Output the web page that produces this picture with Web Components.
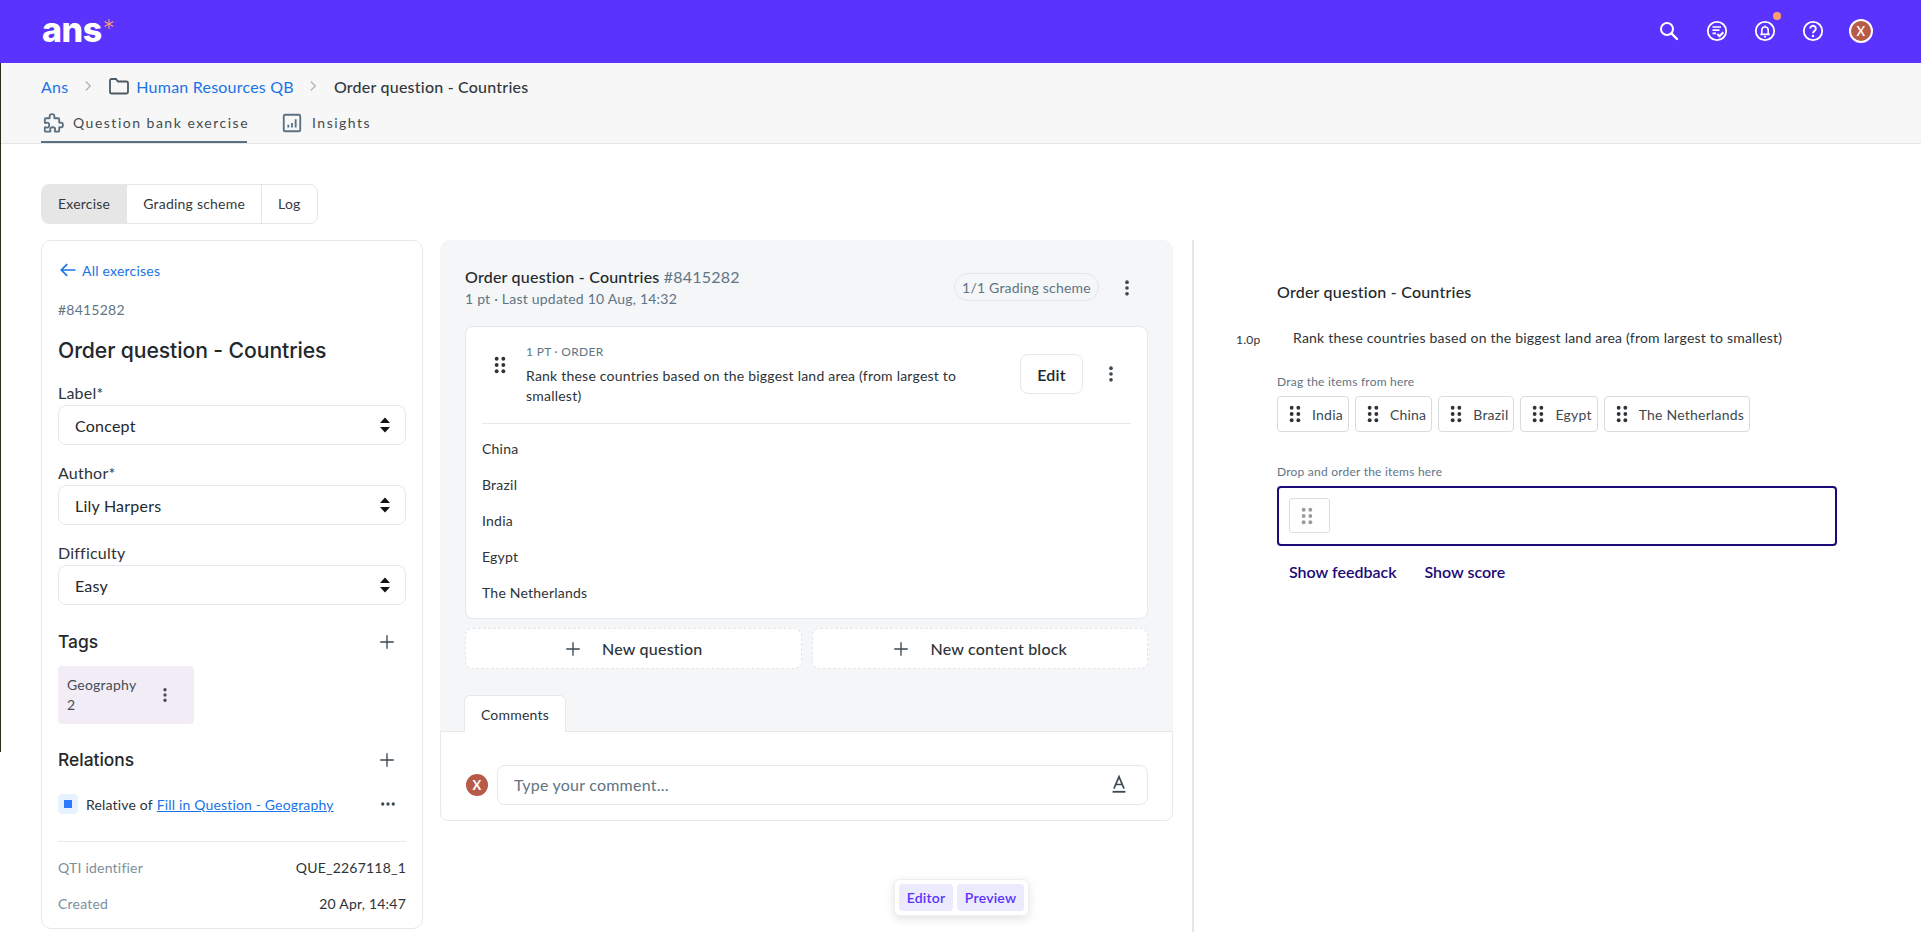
<!DOCTYPE html>
<html lang="en"><head><meta charset="utf-8"><title>Order question</title>
<style>
html,body{margin:0;height:932px;overflow:hidden;background:#fff;font-family:"Lato","Open Sans",sans-serif;color:#2d3338;letter-spacing:.22px}
</style></head><body>
<app-shell></app-shell>
<script>
const FONT='"Lato","Open Sans",sans-serif';
const HEAD='"Inter","Open Sans",sans-serif';
const ICONS={
search:'<circle cx="10" cy="10" r="6" fill="none" stroke="currentColor" stroke-width="2"/><path d="M14.5 14.5 20 20" stroke="currentColor" stroke-width="2.4" stroke-linecap="round"/>',
tasks:'<circle cx="12" cy="12" r="9.2" fill="none" stroke="currentColor" stroke-width="1.8"/><path d="M7.5 8h8.500M7.500 11.200h7M7.500 14.400h3.500" stroke="currentColor" stroke-width="1.700"/><path d="m12.300 15 2.200 2.200 3.800-4" fill="none" stroke="currentColor" stroke-width="2"/>',
bell:'<circle cx="12" cy="12" r="9.2" fill="none" stroke="currentColor" stroke-width="1.8"/><path d="M8.800 15.200v-4a3.200 3.200 0 0 1 6.400 0v4M7.300 15.400h9.400M11 17.800h2" fill="none" stroke="currentColor" stroke-width="1.600"/><path d="M12 6.600v1" stroke="currentColor" stroke-width="1.600"/>',
help:'<circle cx="12" cy="12" r="9.2" fill="none" stroke="currentColor" stroke-width="1.8"/><path d="M9.200 9.600a2.800 2.800 0 1 1 4.400 2.300c-1 .7-1.600 1.200-1.600 2.400" fill="none" stroke="currentColor" stroke-width="1.900"/><circle cx="12" cy="17" r="1.200" fill="currentColor"/>',
chev:'<path d="m9 6 6 6-6 6" fill="none" stroke="currentColor" stroke-width="1.800"/>',
folder:'<path d="M3 6.500A1.500 1.500 0 0 1 4.500 5H9l2 2.500h8.500A1.500 1.500 0 0 1 21 9v9a1.500 1.500 0 0 1-1.500 1.500h-15A1.500 1.500 0 0 1 3 18z" fill="none" stroke="currentColor" stroke-width="1.800"/>',
puzzle:'<path d="M9 4.500c0-3 5-3 5 0 0 1 -.5 1.500 0 2h4c.8 0 1 .4 1 1v3.500c.5.5 1 0 2 0 2.500 0 2.500 5 0 5-1 0-1.500-.5-2 0v3.500c0 .6-.4 1-1 1h-3.500c-.6-.6.300-1.500.300-2.500 0-2.800-5.300-2.800-5.300 0 0 1 .9 1.900.300 2.500H5c-.6 0-1-.4-1-1v-3.500c.6-.6 1.500.300 2.500.300 2.800 0 2.800-5.300 0-5.300-1 0-1.900.9-2.500.300V7.500c0-.6.4-1 1-1h4c.5-.5 0-1 0-2z" fill="none" stroke="currentColor" stroke-width="1.900" stroke-linejoin="round"/>',
chart:'<rect x="3" y="3" width="18" height="18" rx="1.500" fill="none" stroke="currentColor" stroke-width="2"/><path d="M8 17v-3M12 17v-5M16 17V8" stroke="currentColor" stroke-width="2"/>',
back:'<path d="M21 12H4M11 5l-7 7 7 7" fill="none" stroke="currentColor" stroke-width="2"/>',
sort:'<path d="M12 3 18 9.500H6zM12 21 6 14.500h12z" fill="currentColor"/>',
plus:'<path d="M12 3v18M3 12h18" stroke="currentColor" stroke-width="1.800"/>',
vdots:'<circle cx="12" cy="5" r="2.200" fill="currentColor"/><circle cx="12" cy="12" r="2.200" fill="currentColor"/><circle cx="12" cy="19" r="2.200" fill="currentColor"/>',
hdots:'<circle cx="5" cy="12" r="2.200" fill="currentColor"/><circle cx="12" cy="12" r="2.200" fill="currentColor"/><circle cx="19" cy="12" r="2.200" fill="currentColor"/>',
grip:'<circle cx="8" cy="4.500" r="2.300" fill="currentColor"/><circle cx="16" cy="4.500" r="2.300" fill="currentColor"/><circle cx="8" cy="12" r="2.300" fill="currentColor"/><circle cx="16" cy="12" r="2.300" fill="currentColor"/><circle cx="8" cy="19.500" r="2.300" fill="currentColor"/><circle cx="16" cy="19.500" r="2.300" fill="currentColor"/>',
font:'<path d="m6.500 17 5.500-13 5.500 13M8.500 12.500h7" fill="none" stroke="currentColor" stroke-width="1.800"/><path d="M5 20.500h14" stroke="currentColor" stroke-width="2"/>'
};
function def(name,css,html){
  customElements.define(name,class extends HTMLElement{
    connectedCallback(){ if(this.shadowRoot)return;
      const r=this.attachShadow({mode:'open'});
      const g=n=>this.getAttribute(n)||'';
      r.innerHTML='<style>'+css+'</style>'+(typeof html==='function'?html(g):html);
    }
  });
}
def('x-icon',':host{display:inline-flex;flex:none;width:var(--s,24px);height:var(--s,24px)}svg{width:100%;height:100%;display:block}',
  g=>`<svg viewBox="0 0 24 24" aria-hidden="true">${ICONS[g('name')]}</svg>`);

def('app-header',`
:host{display:flex;align-items:center;height:63px;background:#5a33ff;color:#fff;padding:0 48px 0 42px;box-sizing:border-box;flex:none}
.logo{display:flex;align-items:flex-start;font:800 34px/34px ${HEAD};letter-spacing:-.4px;margin-top:-4px}
.logo svg{width:10px;height:10px;margin:6px 0 0 2px}
.r{margin-left:auto;display:flex;align-items:center;gap:24px;margin-top:-1px}
.b{position:relative;display:flex}
.dot{position:absolute;right:-4px;top:-7px;width:8px;height:8px;border-radius:50%;background:#ff9e6d}
.av{width:24px;height:24px;box-sizing:border-box;border-radius:50%;background:#b85a48;border:2px solid #fff;display:flex;align-items:center;justify-content:center;font:600 13px ${FONT}}
`,`<div class="logo">ans<svg viewBox="0 0 11 11"><path d="M5.500 0v11M.7 2.700l9.600 5.600M10.300 2.700.7 8.300" stroke="#ff9e6d" stroke-width="1.200"/></svg></div>
<div class="r"><x-icon name="search"></x-icon><x-icon name="tasks"></x-icon><span class="b"><x-icon name="bell"></x-icon><i class="dot"></i></span><x-icon name="help"></x-icon><span class="av">X</span></div>`);

def('sub-nav',`
:host{display:block;height:81px;background:#f7f7f7;border-bottom:1px solid #e4e4e4;box-sizing:border-box;padding:0 0 0 41px;flex:none}
.bc{display:flex;align-items:center;height:48px;box-sizing:border-box;padding-bottom:2px;font:400 16px ${FONT}}
a{color:#1a73e8;text-decoration:none}
.c{--s:18px;color:#a9b6bf;margin:0 10.500px}
.c.l{margin-right:11.500px}
.f{--s:24px;color:#4b5a65;margin-right:5px}
.cur{color:#33393e;font-weight:500}
.tabs{display:flex;height:32px;gap:33px}
.t{display:flex;align-items:flex-start;gap:9px;font:400 14px/22px ${FONT};letter-spacing:1.500px;padding:1px 0 0 1px;box-sizing:border-box;height:32px;color:#444b50;white-space:nowrap}
.t.on{border-bottom:2px solid #5b7080;width:206px;padding-left:0}
.t.on x-icon{--s:23px}
.t x-icon{--s:22px;color:#5b7080}
`,`<div class="bc"><a href="#">Ans</a><x-icon class="c" name="chev"></x-icon><x-icon class="f" name="folder"></x-icon><a href="#">Human Resources QB</a><x-icon class="c l" name="chev"></x-icon><span class="cur">Order question - Countries</span></div>
<div class="tabs"><div class="t on"><x-icon name="puzzle"></x-icon>Question bank exercise</div><div class="t"><x-icon name="chart"></x-icon>Insights</div></div>`);

def('seg-tabs',`
:host{display:flex;width:max-content;height:40px;border:1px solid #e6e6e6;border-radius:8px;overflow:hidden;box-sizing:border-box;font:400 14px ${FONT};color:#33393e;background:#fff}
span{display:flex;align-items:center;padding:0 16px 1px;border-right:1px solid #e6e6e6}
span:last-child{border:0}
.on{background:#e6e6e6}
`,`<span class="on">Exercise</span><span>Grading scheme</span><span>Log</span>`);

def('field-select',`
:host{display:block;margin-bottom:16px}
label{display:block;font:400 16px/24px ${FONT};color:#2d3338;height:24px}
.s{display:flex;align-items:center;height:40px;box-sizing:border-box;border:1px solid #e6e8ea;border-radius:8px;padding:0 10px 0 16px;font:400 16px ${FONT};color:#23282c}
x-icon{--s:20px;margin-left:auto;color:#111}
`,g=>`<label>${g('label')}</label><div class="s">${g('value')}<x-icon name="sort"></x-icon></div>`);

def('side-panel',`
:host{display:block;width:382px;height:689px;flex:none;box-sizing:border-box;border:1px solid #e6e8ea;border-radius:10px;padding:0 16px;font-family:${FONT};color:#2d3338;overflow:hidden}
.back{display:flex;align-items:center;gap:4px;height:20px;margin:19px 0 0;color:#1a73e8;font-size:14px}
.back x-icon{--s:20px}
.id{margin-top:20px;font-size:14px;line-height:20px;color:#5f7484}
h1{font:500 21.200px/30px ${HEAD};margin:15px 0 16px;color:#23282c;letter-spacing:-.1px}
.h{display:flex;align-items:center;justify-content:space-between;font:500 17.400px/24px ${HEAD};color:#23282c;letter-spacing:0}
.h x-icon{--s:18px;margin-right:10px;color:#3d4850}
.tag{width:136px;height:58px;background:#f2ecf6;border-radius:4px;margin-top:12px;box-sizing:border-box;padding:8px 9px;display:flex;align-items:center;justify-content:space-between;font-size:14px;line-height:20px;color:#454d53}
.tag x-icon{--s:18px;margin-right:11px;color:#454d53}
.rel{display:flex;align-items:center;height:20px;margin-top:22px;font-size:14px;letter-spacing:.16px}
.sq{width:20px;height:20px;border-radius:4px;background:#e8f1fe;display:flex;align-items:center;justify-content:center;margin-right:8px}
.sq i{width:8px;height:8px;background:#2b7bff}
.rel a{color:#1a73e8;margin-left:4px}
.rel x-icon{--s:18px;margin-left:auto;margin-right:9px;color:#3d4850}
hr{border:0;border-top:1px solid #e6e8ea;margin:27px 0 16px}
.m{display:flex;justify-content:space-between;font-size:14px;line-height:20px;height:36px;color:#2d3338}
.m span:first-child{color:#7d909d}
`,`<div class="back"><x-icon name="back"></x-icon>All exercises</div>
<div class="id">#8415282</div>
<h1>Order question - Countries</h1>
<field-select label="Label*" value="Concept"></field-select>
<field-select label="Author*" value="Lily Harpers"></field-select>
<field-select label="Difficulty" value="Easy"></field-select>
<div class="h" style="margin-top:25px">Tags<x-icon name="plus"></x-icon></div>
<div class="tag"><span>Geography<br>2</span><x-icon name="vdots"></x-icon></div>
<div class="h" style="margin-top:24px">Relations<x-icon name="plus"></x-icon></div>
<div class="rel"><span class="sq"><i></i></span>Relative of <a href="#">Fill in Question - Geography</a><x-icon name="hdots"></x-icon></div>
<hr>
<div class="m"><span>QTI identifier</span><span>QUE_2267118_1</span></div>
<div class="m"><span>Created</span><span>20 Apr, 14:47</span></div>`);

def('question-panel',`
:host{display:block;width:733px;flex:none;font-family:${FONT};color:#2d3338}
.top{background:#f5f6f8;border-radius:10px 10px 0 0;padding:25px 25px 0;height:491px;box-sizing:border-box}
.hd{display:flex;align-items:flex-start;height:61px}
.ti{font:500 16px/24px ${FONT};color:#23282c}
.ti span{color:#5f7484;font-weight:400}
.su{font-size:14px;line-height:20px;color:#5f7484}
.pill{margin:8px 0 0 auto;height:28px;width:145px;box-sizing:border-box;border:1px solid #e3e6e9;border-radius:14px;display:flex;align-items:center;justify-content:center;font-size:14px;color:#5f7484}
.hd x-icon{--s:20px;margin:13px 11px 0 18px;color:#3d4850}
.card{background:#fff;border:1px solid #e6e8ea;border-radius:8px;height:293px;box-sizing:border-box;padding:0 16px;position:relative}
.q{display:flex;height:96px;border-bottom:1px solid #e6e8ea;align-items:flex-start}
.g{--s:20px;margin:28px 0 0 8px;color:#2d3338}
.qt{margin-left:16px;width:470px;padding-top:16px;font-size:14px;line-height:19.500px;color:#2d3338}
.qt small{display:block;font-size:12px;line-height:18px;color:#5f7484;letter-spacing:.3px;margin-bottom:5px}
.edit{margin:27px 0 0 auto;width:63px;height:40px;box-sizing:border-box;border:1px solid #e6e8ea;border-radius:8px;display:flex;align-items:center;justify-content:center;font-size:16px;font-weight:600;color:#23282c;background:#fff}
.q>x-icon:last-child{--s:20px;margin:37px 10px 0 18px;color:#3d4850}
ul{list-style:none;margin:7px 0 0;padding:0;font-size:14px}
li{height:36px;line-height:36px;color:#2d3338}
.adds{display:flex;gap:10px;margin-top:9px}
.add{flex:1;height:41px;box-sizing:border-box;background:#fff;border:1px dashed #e3e6e9;border-radius:8px;display:flex;align-items:center;justify-content:center;gap:20px;font-size:16px;font-weight:500;color:#2d3338}
.add x-icon{--s:18px;color:#3d4850}
.tab{width:102px;height:37px;margin-top:25px;box-sizing:border-box;border:1px solid #e6e8ea;border-bottom:0;border-radius:6px 6px 0 0;background:#fff;margin-left:-1px;display:flex;align-items:center;justify-content:center;font-size:14px;position:relative;top:1px}
.bot{height:90px;box-sizing:border-box;border:1px solid #e6e8ea;border-radius:0 0 8px 8px;background:#fff;display:flex;align-items:flex-start;padding:33px 24px 0 25px}
.av{width:22px;height:22px;border-radius:50%;background:#b85a48;color:#fff;font:700 13px/22px ${FONT};text-align:center;margin-top:9px;flex:none}
.in{margin-left:9px;flex:1;height:40px;box-sizing:border-box;border:1px solid #e6e8ea;border-radius:8px;display:flex;align-items:center;padding:0 17px 2px 16px;font-size:16px;color:#5f7484}
.in x-icon{--s:22px;margin-left:auto;color:#3d4850}
`,`<div class="top">
<div class="hd"><div><div class="ti">Order question - Countries <span>#8415282</span></div><div class="su">1 pt · Last updated 10 Aug, 14:32</div></div><div class="pill">1/1 Grading scheme</div><x-icon name="vdots"></x-icon></div>
<div class="card"><div class="q"><x-icon class="g" name="grip"></x-icon><div class="qt"><small>1 PT · ORDER</small>Rank these countries based on the biggest land area (from largest to smallest)</div><div class="edit">Edit</div><x-icon name="vdots"></x-icon></div>
<ul><li>China</li><li>Brazil</li><li>India</li><li>Egypt</li><li>The Netherlands</li></ul></div>
<div class="adds"><div class="add"><x-icon name="plus"></x-icon>New question</div><div class="add"><x-icon name="plus"></x-icon>New content block</div></div>
<div class="tab">Comments</div></div>
<div class="bot"><div class="av">X</div><div class="in">Type your comment...<x-icon name="font"></x-icon></div></div>`);

def('drag-chip',`
:host{display:inline-flex;align-items:center;height:36px;box-sizing:border-box;border:1px solid #d9dcdf;border-radius:4px;padding:0 5px 0 7px;font:400 14px ${FONT};color:#3d4850;gap:7px;background:#fff;flex:none}
x-icon{--s:20px;color:#2d3338}
`,g=>`<x-icon name="grip"></x-icon>${g('t')}`);

def('preview-panel',`
:host{display:block;flex:none;border-left:2px solid #e6e6e6;width:645px;box-sizing:border-box;padding:40px 0 0 83px;font-family:${FONT};color:#2d3338;align-self:stretch}
.t{font:500 16px/24px ${FONT};color:#23282c}
.q{position:relative;margin-top:24px;padding-left:16px;font-size:14px;line-height:20px}
.p{position:absolute;left:-41px;top:3px;font-size:12px;line-height:18px}
.l{font-size:12px;line-height:18px;color:#5f7484}
.chips{display:flex;gap:6px;margin-top:5px}
.d{height:60px;box-sizing:border-box;border:2px solid #1b0a78;border-radius:4px;margin-top:5px;width:560px;padding:10px}
.ph{width:41px;height:35px;box-sizing:border-box;border:1px solid #dcdfe2;border-radius:3px;display:flex;align-items:center;justify-content:center;color:#9a9a9a;padding:1px 5px 0 0}
.ph x-icon{--s:20px}
.a{display:flex;gap:28px;margin:16px 0 0 12px;font-size:16px;font-weight:600;color:#1b0a78;line-height:20px;letter-spacing:0}
`,`<div class="t">Order question - Countries</div>
<div class="q"><span class="p">1.0p</span>Rank these countries based on the biggest land area (from largest to smallest)</div>
<div class="l" style="margin-top:25px">Drag the items from here</div>
<div class="chips"><drag-chip t="India"></drag-chip><drag-chip t="China"></drag-chip><drag-chip t="Brazil"></drag-chip><drag-chip t="Egypt"></drag-chip><drag-chip t="The Netherlands"></drag-chip></div>
<div class="l" style="margin-top:31px">Drop and order the items here</div>
<div class="d"><div class="ph"><x-icon name="grip"></x-icon></div></div>
<div class="a"><span>Show feedback</span><span>Show score</span></div>`);

def('float-toggle',`
:host{position:fixed;left:894px;top:879px;display:flex;gap:4px;padding:4px;box-sizing:border-box;width:135px;height:37px;background:#fff;border:1px solid #eceef0;border-radius:6px;box-shadow:0 3px 10px rgba(40,50,70,.14);font:600 14px ${FONT}}
span{flex:auto;display:flex;align-items:center;justify-content:center;background:#ecebfd;color:#5a33ff;border-radius:4px}
`,`<span>Editor</span><span>Preview</span>`);

def('app-shell',`
:host{display:flex;flex-direction:column;height:932px;overflow:hidden;position:relative}
main{padding:40px 0 0 41px;flex:1;display:flex;flex-direction:column;min-height:0}
.row{display:flex;gap:17px;margin-top:16px;flex:1;min-height:0}
.row preview-panel{margin-left:2px}
.edge{position:absolute;left:0;top:63px;width:1px;height:689px;background:#2e2a1c}
`,`<app-header></app-header><sub-nav></sub-nav><main><seg-tabs></seg-tabs><div class="row"><side-panel></side-panel><question-panel></question-panel><preview-panel></preview-panel></div></main><float-toggle></float-toggle><div class="edge"></div>`);
</script>
</body></html>
